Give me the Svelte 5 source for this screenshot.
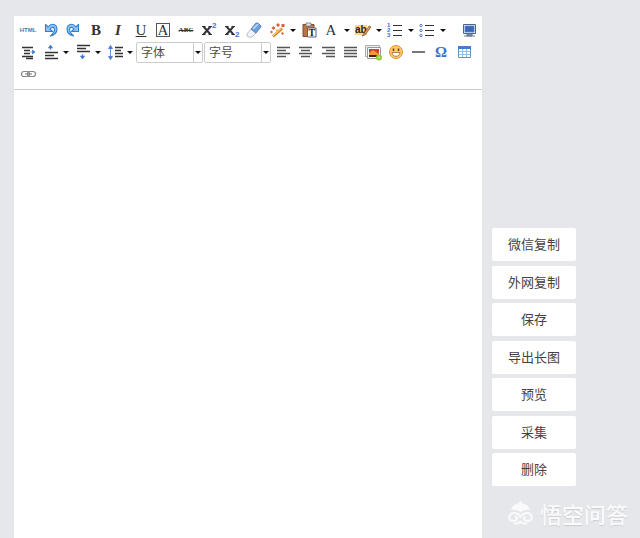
<script>
  let content = $state('');

  const rowOne = [
    [{ id: 'html', title: 'HTML' }],
    [{ id: 'undo', title: '撤销' }, { id: 'redo', title: '重做' }],
    [{ id: 'bold', title: '加粗' }, { id: 'italic', title: '斜体' }],
    [{ id: 'underline', title: '下划线' }, { id: 'border', title: '字符边框' }],
    [{ id: 'strike', title: '删除线' }],
    [{ id: 'sup', title: '上标' }],
    [{ id: 'sub', title: '下标' }, { id: 'eraser', title: '清除格式' }],
    [
      { id: 'wand', title: '自动排版', menu: true },
      { id: 'paste', title: '纯文本粘贴' },
      { id: 'color', title: '字体颜色', menu: true },
      { id: 'marker', title: '背景色', menu: true },
      { id: 'ol', title: '有序列表', menu: true },
      { id: 'ul', title: '无序列表', menu: true }
    ],
    [{ id: 'screen', title: '全屏' }]
  ];

  const rowTwoStart = [
    [
      { id: 'indent', title: '首行缩进' },
      { id: 'before', title: '段前距', menu: true },
      { id: 'after', title: '段后距', menu: true },
      { id: 'leading', title: '行间距', menu: true }
    ]
  ];

  const rowTwoEnd = [
    [{ id: 'left', title: '居左对齐' }, { id: 'center', title: '居中对齐' }],
    [{ id: 'right', title: '居右对齐' }, { id: 'justify', title: '两端对齐' }],
    [{ id: 'image', title: '多图上传' }],
    [{ id: 'emoji', title: '表情' }, { id: 'rule', title: '分隔线' }],
    [{ id: 'omega', title: '特殊字符' }],
    [{ id: 'table', title: '插入表格' }]
  ];

  const rowThree = [[{ id: 'link', title: '超链接' }]];

  const letters = {
    html: 'HTML',
    bold: 'B',
    italic: 'I',
    underline: 'U',
    border: 'A',
    strike: 'ABC',
    color: 'A',
    omega: 'Ω'
  };

  const lines = {
    left: 'M4 5.5h13M4 8.5h9M4 11.5h13M4 14.5h9',
    center: 'M4 5.5h13M6 8.5h9M4 11.5h13M6 14.5h9',
    right: 'M4 5.5h13M8 8.5h9M4 11.5h13M8 14.5h9',
    justify: 'M4 5.5h13M4 8.5h13M4 11.5h13M4 14.5h13'
  };

  const combos = ['字体', '字号'];
  const actions = ['微信复制', '外网复制', '保存', '导出长图', '预览', '采集', '删除'];
</script>

{#snippet icon(id)}
  {#if letters[id]}
    <span class="letter {id}">{letters[id]}</span>
  {:else if id === 'sup' || id === 'sub'}
    <svg viewBox="0 0 20 20" aria-hidden="true">
      <path d="M4.500 6.500l7 8M11.500 6.500l-7 8" stroke="#333" stroke-width="1.900" fill="none" />
      <path d="M3 6.500h3.500M9.500 6.500H13M3 14.500h3.500M9.500 14.500H13" stroke="#333" fill="none" />
      <text class="script" x="13" y={id === 'sup' ? 8 : 17}>2</text>
    </svg>
  {:else}
    <svg viewBox="0 0 20 20" aria-hidden="true">
      {#if lines[id]}
        <path d={lines[id]} stroke="#555" stroke-width="1.4" />
      {:else if id === 'undo' || id === 'redo'}
        <g transform={id === 'redo' ? 'translate(20 0) scale(-1 1)' : undefined}>
          <path
            d="M4.500 4.500v7h7l-2.500-2.500c2-2.500 4.500-2 4.500.500 0 2.500-2 4.500-4 6.500 4-1 6.500-3.500 6.500-7 0-5-5.500-6.500-9-2z"
            fill="#8fc3f2"
            stroke="#2f80d0"
            stroke-width="1.100"
            stroke-linejoin="round"
          />
        </g>
      {:else if id === 'eraser'}
        <path d="M3 14l4-5 5 4-4 4H5l-2-1z" fill="#f2f5fa" stroke="#a3aebd" stroke-width=".8" />
        <path d="M7 9l5-6h2l3 3v1l-5 6z" fill="#6b9fdc" stroke="#5179ae" stroke-width=".8" />
        <path d="M9 9l5-5" stroke="#b9d6f5" stroke-width="1.6" />
      {:else if id === 'wand'}
        <path d="M6 16.500l9-8" stroke="#d58a2d" stroke-width="3" />
        <path d="M6 16l8-7.500" stroke="#ffe0a0" />
        <path d="M4.500 8l2-2 2 2-2 2zM9 5l2-2 2 2-2 2zM14.500 4h3v3h-3zM3 12l1.500-1.500L6 12l-1.500 1.500zM14 13.500l1.500-1.500 1.500 1.500-1.500 1.500z" fill="#dc6040" />
        <path d="M9 9.500h2v2H9z" fill="#efb13d" />
      {:else if id === 'paste'}
        <path d="M4 4.500h11v12H4z" fill="#b8744b" stroke="#7d4c31" />
        <path d="M7 3h5v3H7z" fill="#e4e4e4" stroke="#777" stroke-width=".8" />
        <path d="M8.500 8h8.500v9H8.500z" fill="#fff" stroke="#53657e" />
        <text class="plain" x="9.500" y="16">T</text>
      {:else if id === 'marker'}
        <path d="M2 5h12v10H2z" fill="#ffd689" />
        <text class="mark" x="2" y="13">ab</text>
        <path d="M10 15l6-9 2 1-6 8-3 1z" fill="#e09a58" stroke="#7e522c" stroke-width=".7" />
      {:else if id === 'ol' || id === 'ul'}
        <path d="M8 5.500h9M8 10.500h9M8 15.500h9" stroke="#333" stroke-width="1.200" />
        {#if id === 'ol'}
          <text class="number" x="2" y="7">1</text>
          <text class="number" x="2" y="12">2</text>
          <text class="number" x="2" y="17">3</text>
        {:else}
          <g fill="#fff" stroke="#5078c8">
            <circle cx="4" cy="5.500" r="1.200" />
            <circle cx="4" cy="10.500" r="1.200" />
            <circle cx="4" cy="15.500" r="1.200" />
          </g>
        {/if}
      {:else if id === 'screen'}
        <path d="M4.500 4.500h12v9h-12z" fill="#dfe8f6" stroke="#4a648f" />
        <path d="M6 6h9v6H6z" fill="#3d67b6" stroke="#5b86cf" stroke-width=".7" />
        <path d="M8 14h5v2H8zM5 16h11" fill="#8c9db9" stroke="#65789a" />
      {:else if id === 'indent'}
        <path d="M4 5.500h11M6 8.500h6M6 11.500h6M4 14.500h11M8 16.500h7" stroke="#333" stroke-width="1.300" />
        <path d="M12.500 10h3M14.500 8v4l2.500-2z" fill="#4778d2" stroke="#4778d2" stroke-width=".7" />
      {:else if id === 'before'}
        <path d="M5 10.500h13M5 13.500h9M5 16.500h13" stroke="#333" stroke-width="1.300" />
        <path d="M10.500 8V5M8.500 6h4l-2-3z" fill="#4778d2" stroke="#4778d2" stroke-width=".8" />
      {:else if id === 'after'}
        <path d="M5 3.500h13M5 6.500h9M5 9.500h13" stroke="#333" stroke-width="1.300" />
        <path d="M10.500 12v3M8.500 14h4l-2 3z" fill="#4778d2" stroke="#4778d2" stroke-width=".8" />
      {:else if id === 'leading'}
        <path d="M11 5.500h8M11 8.500h6M11 11.500h8M11 14.500h8" stroke="#333" stroke-width="1.300" />
        <path d="M6.500 5v11M4.500 6.500h4l-2-3zM4.500 14.500h4l-2 3z" fill="#4778d2" stroke="#4778d2" stroke-width=".8" />
      {:else if id === 'image'}
        <path d="M2.500 3.500h14v11h-14z" fill="#eee" stroke="#aaa" />
        <path d="M4.500 5.500h13v11h-13z" fill="#fff" stroke="#999" />
        <path d="M6 7h10v8H6z" fill="#c8452a" />
        <path d="M6 11l4-3 6 4v1H6z" fill="#ef9a35" />
        <path d="M6 13h10v2H6z" fill="#46241b" />
        <circle cx="16" cy="15.500" r="3" fill="#8bce37" />
        <path d="M16 14v3M14.500 15.500h3" stroke="#b9e678" />
      {:else if id === 'emoji'}
        <circle cx="10" cy="10" r="6.500" fill="#ffc96a" stroke="#e0922c" />
        <path d="M6 10.500h8c0 5-8 5-8 0z" fill="#fff" stroke="#a8642a" stroke-width=".8" />
        <path d="M7.500 6.500v2.500M12.500 6.500v2.500" stroke="#684015" stroke-width="1.500" />
      {:else if id === 'rule'}
        <path d="M4 10h13" stroke="#555" stroke-width="1.600" />
      {:else if id === 'table'}
        <path d="M4.500 4.500h12v11h-12z" fill="#fff" stroke="#6b91c9" />
        <path d="M4 4h13v3H4z" fill="#4b7bc4" />
        <path d="M5 9.500h11M5 12.500h11M8.500 7v8M12.500 7v8" stroke="#9bb9de" />
      {:else if id === 'link'}
        <g fill="none" stroke="#888" stroke-width="1.200">
          <rect x="3.500" y="7.500" width="8" height="5" rx="2.500" />
          <rect x="9.500" y="7.500" width="8" height="5" rx="2.500" />
          <path d="M7 10h7" />
        </g>
      {/if}
    </svg>
  {/if}
{/snippet}

{#snippet groups(list)}
  {#each list as group}
    <div class="group">
      {#each group as tool}
        <button class="tool" type="button" title={tool.title} aria-label={tool.title}>
          {@render icon(tool.id)}
        </button>
        {#if tool.menu}
          <button class="more" type="button" aria-label="{tool.title}选项">
            <span class="caret"></span>
          </button>
        {/if}
      {/each}
    </div>
  {/each}
{/snippet}

<main class="page">
  <section class="editor">
    <div class="toolbar" role="toolbar" aria-label="编辑工具栏">
      <div class="row first">{@render groups(rowOne)}</div>
      <div class="row">
        {@render groups(rowTwoStart)}
        {#each combos as name}
          <div class="combo">
            <select aria-label={name}>
              <option>{name}</option>
            </select>
            <span class="drop"><span class="caret"></span></span>
          </div>
        {/each}
        {@render groups(rowTwoEnd)}
      </div>
      <div class="row">{@render groups(rowThree)}</div>
    </div>
    <textarea class="content" aria-label="正文" bind:value={content}></textarea>
  </section>

  <aside class="actions">
    {#each actions as action}
      <button class="action" type="button">{action}</button>
    {/each}
  </aside>
</main>

<div class="watermark">
  <svg viewBox="0 0 28 26" aria-hidden="true">
    <path d="M4 10c1-4 4-6 8-7l2-3 2 3c4 1 7 3 8 7-4-1-7 0-10 2-3-2-6-3-10-2z" fill="currentColor" />
    <g fill="none" stroke="currentColor" stroke-width="2.200" stroke-linecap="round">
      <path d="M14 17c-2-4-7-5-10-3-3 3-2 7 2 7 4 1 6-3 3-4" />
      <path d="M14 17c2-4 7-5 10-3 3 3 2 7-2 7-4 1-6-3-3-4" />
      <path d="M8 24c3 0 5-1 6-2 1 1 3 2 6 2" />
    </g>
  </svg>
  <span>悟空问答</span>
</div>

<style>
  :global(body) {
    margin: 0;
    background: #e6e7eb;
    font-family: "Noto Sans CJK SC", sans-serif;
  }

  .page {
    display: flex;
    align-items: flex-start;
    gap: 10px;
    box-sizing: border-box;
    min-height: 100vh;
    padding: 16px 64px 0 14px;
  }

  .editor {
    display: flex;
    flex: 1;
    flex-direction: column;
    min-width: 0;
    min-height: calc(100vh - 16px);
    background: #fff;
  }

  .toolbar {
    padding: 3px 2px 4px 3px;
    border-bottom: 1px solid #ccc;
  }

  .row {
    display: flex;
    gap: 1px;
    height: 22px;
  }

  .first .group:last-child {
    margin-left: auto;
  }

  .group {
    display: flex;
  }

  button {
    padding: 0;
    border: 0;
    background: none;
    font-family: inherit;
    cursor: pointer;
  }

  .tool {
    display: flex;
    align-items: center;
    justify-content: center;
    width: 22px;
    height: 22px;
  }

  .tool:hover,
  .more:hover {
    background: #fff5d4;
  }

  .tool svg {
    width: 20px;
    height: 20px;
  }

  .more {
    display: flex;
    align-items: center;
    justify-content: center;
    width: 10px;
    height: 22px;
  }

  .caret {
    border: 3px solid transparent;
    border-top-color: #111;
    border-bottom: 0;
  }

  .letter {
    color: #333;
    font-family: "Liberation Serif", serif;
    font-size: 15px;
    line-height: 16px;
  }

  .html {
    color: #3d7fb5;
    font-family: "Liberation Sans", sans-serif;
    font-size: 6px;
    font-weight: bold;
  }

  .bold {
    font-weight: bold;
  }

  .italic {
    font-style: italic;
    font-weight: bold;
  }

  .underline {
    text-decoration: underline;
  }

  .border {
    width: 12px;
    border: 1px solid #555;
    line-height: 12px;
  }

  .strike {
    font-size: 7px;
    font-weight: bold;
    text-decoration: line-through;
  }

  .omega {
    color: #3c6fd0;
    font-weight: bold;
  }

  .script,
  .number {
    fill: #3c6fd0;
    font-family: "Liberation Sans", sans-serif;
    font-size: 8px;
    font-weight: bold;
  }

  .number {
    font-size: 6px;
  }

  .mark,
  .plain {
    fill: #222;
    font-family: "Liberation Sans", sans-serif;
    font-size: 10px;
    font-weight: bold;
  }

  .plain {
    font-family: "Liberation Serif", serif;
  }

  .combo {
    display: grid;
    grid-template-columns: 1fr 9px;
    align-self: flex-end;
    box-sizing: border-box;
    width: 67px;
    height: 21px;
    border: 1px solid #ccc;
    border-radius: 2px;
  }

  .combo select {
    grid-area: 1 / 1 / 2 / 3;
    min-width: 0;
    padding: 0 10px 2px 4px;
    border: 0;
    background: none;
    color: #554a4a;
    font-family: inherit;
    font-size: 12px;
    appearance: none;
  }

  .drop {
    display: flex;
    grid-area: 1 / 2;
    align-items: center;
    justify-content: center;
    border-left: 1px solid #ccc;
    pointer-events: none;
  }

  .content {
    flex: 1;
    padding: 8px;
    border: 0;
    outline: 0;
    background: none;
    font-family: inherit;
    font-size: 16px;
    resize: none;
  }

  .actions {
    display: flex;
    flex-direction: column;
    justify-content: space-between;
    width: 84px;
    height: 258px;
    margin-top: 212px;
  }

  .action {
    height: 33px;
    padding-bottom: 2px;
    border-radius: 2px;
    background: #fff;
    color: #473f42;
    font-size: 13px;
  }

  .action:hover {
    background: #f6f6f8;
  }

  .watermark {
    position: fixed;
    right: 12px;
    bottom: 9px;
    display: flex;
    align-items: center;
    gap: 6px;
    color: #fafafb;
    font-size: 22px;
    font-weight: 500;
    line-height: 32px;
    text-shadow: 0 1px 1px #ccced3;
    pointer-events: none;
  }

  .watermark svg {
    width: 27px;
    height: 26px;
  }
</style>
